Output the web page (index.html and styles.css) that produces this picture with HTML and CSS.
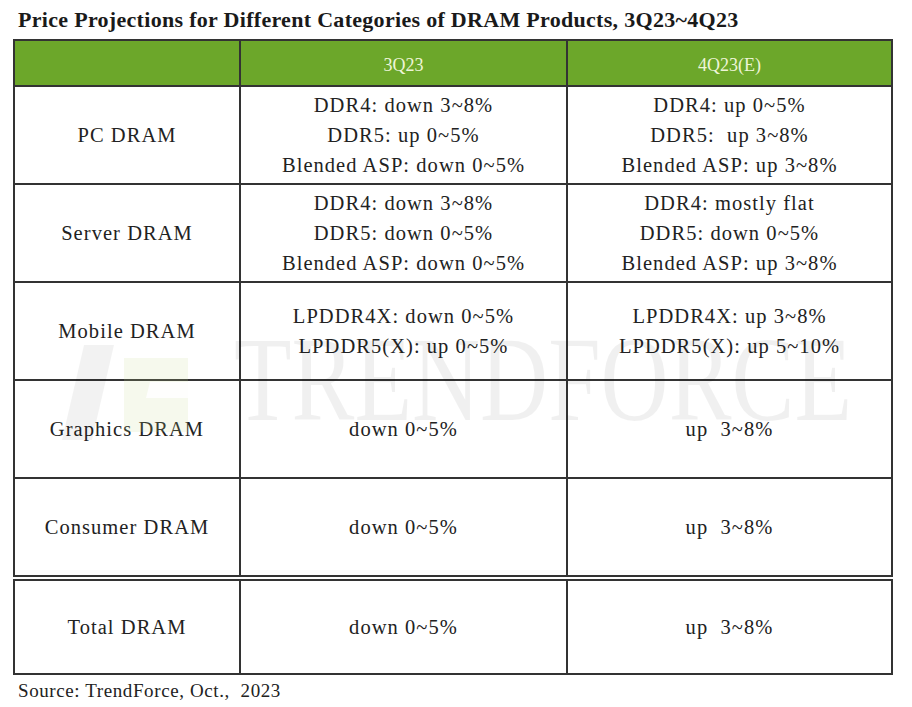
FILE: index.html
```html
<!DOCTYPE html>
<html>
<head>
<meta charset="utf-8">
<link rel="stylesheet" href="styles.css">
</head>
<body>
<div class="page">
  <h1 class="title">Price Projections for Different Categories of DRAM Products, 3Q23~4Q23</h1>
  <table class="grid">
    <colgroup><col class="c1"><col class="c2"><col class="c3"></colgroup>
    <thead>
      <tr class="head"><th></th><th>3Q23</th><th>4Q23(E)</th></tr>
    </thead>
    <tbody>
      <tr><td>PC DRAM</td><td>DDR4: down 3~8%<br>DDR5: up 0~5%<br>Blended ASP: down 0~5%</td><td>DDR4: up 0~5%<br>DDR5:&nbsp; up 3~8%<br>Blended ASP: up 3~8%</td></tr>
      <tr><td>Server DRAM</td><td>DDR4: down 3~8%<br>DDR5: down 0~5%<br>Blended ASP: down 0~5%</td><td>DDR4: mostly flat<br>DDR5: down 0~5%<br>Blended ASP: up 3~8%</td></tr>
      <tr><td>Mobile DRAM</td><td>LPDDR4X: down 0~5%<br>LPDDR5(X): up 0~5%</td><td>LPDDR4X: up 3~8%<br>LPDDR5(X): up 5~10%</td></tr>
      <tr><td>Graphics DRAM</td><td>down 0~5%</td><td>up&nbsp; 3~8%</td></tr>
      <tr><td>Consumer DRAM</td><td>down 0~5%</td><td>up&nbsp; 3~8%</td></tr>
      <tr class="total"><td>Total DRAM</td><td>down 0~5%</td><td>up&nbsp; 3~8%</td></tr>
    </tbody>
  </table>
  <p class="source">Source: TrendForce, Oct.,&nbsp; 2023</p>
  <svg class="mark" width="912" height="707" viewBox="0 0 912 707">
    <polygon points="84,345 114,345 92,440 62,440" fill="#000" fill-opacity="0.05"/>
    <polygon points="124,358 188,358 188,432 124,432" fill="#c8dc8c" fill-opacity="0.16"/>
    <polygon points="150,382 188,382 188,398 146,398" fill="#fff" fill-opacity="0.85"/>
    <text x="234" y="420" textLength="618" lengthAdjust="spacingAndGlyphs" class="marktext">TRENDFORCE</text>
  </svg>
</div>
</body>
</html>
```

FILE: styles.css
```css
html, body {
  margin: 0;
  padding: 0;
  background: #ffffff;
}
body {
  font-family: "Liberation Serif", "Times New Roman", serif;
  color: #222;
}
.page {
  position: relative;
  width: 912px;
  height: 707px;
  padding: 0 0 0 13px;
  box-sizing: border-box;
  overflow: hidden;
}
.title {
  margin: 0;
  padding: 7px 0 0 5px;
  height: 31px;
  box-sizing: border-box;
  font-size: 22px;
  line-height: 26px;
  font-weight: bold;
  color: #1a1a1a;
  letter-spacing: 0.3px;
  white-space: nowrap;
}
.grid {
  border-collapse: collapse;
  table-layout: fixed;
  width: 878px;
  margin-top: 8px;
}
.c1 { width: 226px; }
.c2 { width: 327px; }
.c3 { width: 325px; }
.grid th, .grid td {
  border: 2px solid #333;
  text-align: center;
  vertical-align: middle;
  padding: 0;
}
.head th {
  height: 46px;
  background: #6ca72a;
  color: #eef5d8;
  font-weight: normal;
  font-size: 18px;
  line-height: 22px;
  padding-top: 4px;
  box-sizing: border-box;
}
.grid td {
  height: 96px;
  font-size: 20.5px;
  line-height: 30px;
  letter-spacing: 1.05px;
  color: #222;
}
.total td {
  border-top: 6px double #333;
  height: 92px;
}
.source {
  margin: 4px 0 0 5px;
  font-size: 19px;
  line-height: 24px;
  letter-spacing: 0.6px;
  color: #222;
}
.mark {
  position: absolute;
  left: 0;
  top: 0;
  pointer-events: none;
}
.marktext {
  font-family: "Liberation Serif", serif;
  font-size: 120px;
  fill: #000;
  fill-opacity: 0.06;
}
```
